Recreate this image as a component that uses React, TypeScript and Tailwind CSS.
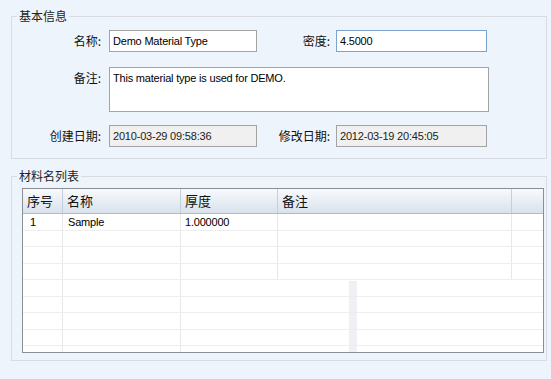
const LATIN = "font-['Liberation_Sans','Noto_Sans_CJK_SC',sans-serif] tracking-[-0.2px]";

const COLS = [
  { key: "no", title: "序号", w: "w-[40px]" },
  { key: "name", title: "名称", w: "w-[118px]" },
  { key: "thick", title: "厚度", w: "w-[97px]" },
  { key: "note", title: "备注", w: "w-[234px]" },
];

const ROWS = [{ no: "1", name: "Sample", thick: "1.000000", note: "" }];

function Label({ text, w }: { text: string; w: string }) {
  return <div className={`${w} shrink-0 text-right text-[12px] leading-[14px] text-[#111]`}>{text}</div>;
}

function Field({ value, w, tone = "normal" }: { value: string; w: string; tone?: "normal" | "focus" | "readonly" }) {
  const look =
    tone === "focus"
      ? "border-[#7aa4cf] bg-white"
      : tone === "readonly"
      ? "border-[#a3a3a3] bg-[#f0f0f0] text-[#222]"
      : "border-[#a3a3a3] bg-white";
  return (
    <div className={`${w} h-[22px] shrink-0 border ${look} flex items-center pl-[3px] text-[11px] ${LATIN}`}>
      {value}
    </div>
  );
}

function Legend({ text }: { text: string }) {
  return <legend className="ml-[5px] px-[2px] text-[12px] leading-[14px] text-[#222]">{text}</legend>;
}

export default function App() {
  const bodyRows = Array.from({ length: 9 }, (_, i) => ROWS[i] ?? null);

  return (
    <div className="w-[551px] h-[379px] overflow-hidden bg-[#eef4fb] pt-[9px] pl-[11px] pr-[4px] font-['Noto_Sans_CJK_SC',sans-serif] text-black">
      {/* 基本信息 */}
      <fieldset className="border border-[#d6dce2] pt-[7px] pb-[11px]">
        <Legend text="基本信息" />
        <div className="flex items-center">
          <Label text="名称:" w="w-[89px]" />
          <div className="ml-[8px]">
            <Field value="Demo Material Type" w="w-[148px]" />
          </div>
          <Label text="密度:" w="w-[73px]" />
          <div className="ml-[6px]">
            <Field value="4.5000" w="w-[151px]" tone="focus" />
          </div>
        </div>
        <div className="mt-[15px] flex items-start">
          <div className="pt-[4px]">
            <Label text="备注:" w="w-[89px]" />
          </div>
          <div
            className={`ml-[8px] w-[380px] h-[45px] border border-[#a3a3a3] bg-white pl-[3px] pt-[3px] text-[11px] leading-[14px] ${LATIN}`}
          >
            This material type is used for DEMO.
          </div>
        </div>
        <div className="mt-[13px] flex items-center">
          <Label text="创建日期:" w="w-[89px]" />
          <div className="ml-[8px]">
            <Field value="2010-03-29 09:58:36" w="w-[148px]" tone="readonly" />
          </div>
          <Label text="修改日期:" w="w-[73px]" />
          <div className="ml-[6px]">
            <Field value="2012-03-19 20:45:05" w="w-[151px]" tone="readonly" />
          </div>
        </div>
      </fieldset>

      {/* 材料名列表 */}
      <fieldset className="mt-[10px] border border-[#d6dce2] pt-[5px] pb-[7px]">
        <Legend text="材料名列表" />
        <div className="ml-[10px] w-[522px] h-[165px] border border-[#8a8f96] bg-white flex flex-col">
          <div className="h-[25px] shrink-0 flex border-b border-[#a9bdd2] bg-gradient-to-b from-[#f8fafc] to-[#d9e2ec]">
            {COLS.map((c) => (
              <div
                key={c.key}
                className={`${c.w} shrink-0 border-r border-[#c2cfdc] pl-[4px] flex items-center text-[13px] text-[#111]`}
              >
                {c.title}
              </div>
            ))}
            <div className="flex-1" />
          </div>
          <div className="relative flex-1 overflow-hidden">
            {bodyRows.map((r, i) => {
              const full = i < 4;
              return (
                <div key={i} className={`h-[16.5px] flex border-b border-[#eeeeee] text-[11px] ${LATIN}`}>
                  <div className="w-[40px] shrink-0 border-r border-[#e8e8ec] pl-[7px] flex items-center">{r?.no}</div>
                  <div className="w-[118px] shrink-0 border-r border-[#e8e8ec] pl-[5px] flex items-center">{r?.name}</div>
                  <div className={`w-[97px] shrink-0 pl-[4px] flex items-center ${full ? "border-r border-[#e8e8ec]" : ""}`}>
                    {r?.thick}
                  </div>
                  <div className={`w-[234px] shrink-0 pl-[4px] flex items-center ${full ? "border-r border-[#e8e8ec]" : ""}`}>
                    {r?.note}
                  </div>
                  <div className="flex-1" />
                </div>
              );
            })}
            <div className="absolute left-[326px] top-[67px] bottom-0 w-[8px] bg-[#ebebf3]/80" />
          </div>
        </div>
      </fieldset>
    </div>
  );
}
